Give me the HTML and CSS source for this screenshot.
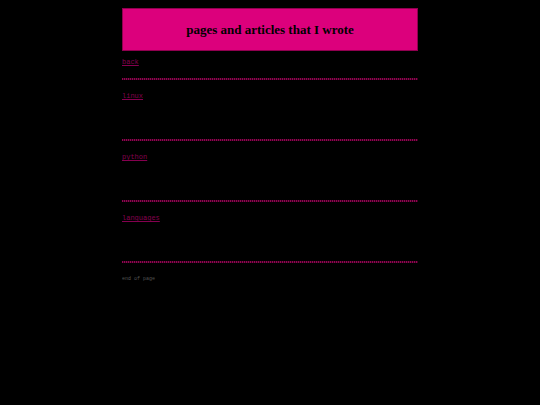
FILE: index.html
```
<!DOCTYPE html>
<html lang="en">
<head>
  <meta charset="UTF-8">
  <meta name="viewport" content="width=device-width, initial-scale=1.0">
  <title>pages and articles that I wrote</title>
  <link rel="stylesheet" href="styles.css">
</head>
<body>
  <div class="header">
    <h1>pages and articles that I wrote</h1>
  </div>

  <div class="nav">
    <a href="back.html">back</a>
  </div>

  <div class="section">
    <a href="linux.html">linux</a>
  </div>

  <div class="section">
    <a href="python.html">python</a>
  </div>

  <div class="section">
    <a href="languages.html">languages</a>
  </div>

  <div class="footer">
    <p>end of page</p>
  </div>
</body>
</html>
```

FILE: styles.css
```
body {
  max-width: 296px;
  margin: 8px auto;
  background-color: #000;
  color: #000;
  font-family: "Liberation Mono", "Courier New", monospace;
  font-size: 7px;
  line-height: 8px;
}

.header {
  background-color: #dc007c;
  border: 1px solid #90004f;
  padding: 13px 0;
  text-align: center;
}

h1 {
  margin: 0;
  font-family: "Liberation Serif", "Times New Roman", serif;
  font-size: 13px;
  line-height: 15px;
}

a {
  color: #85004f;
}

.nav {
  padding: 7px 0 12px;
}

/* fine dotted rule above each block */
.section,
.footer {
  background: repeating-linear-gradient(to right, #90054f 0 1px, #380020 1px 2px) top / 100% 2px no-repeat;
}

.section {
  min-height: 33px;
  padding: 14px 0;
}

.footer {
  padding-top: 14px;
}

.footer p {
  margin: 0;
  color: #555;
  font-size: 5px;
}
```
